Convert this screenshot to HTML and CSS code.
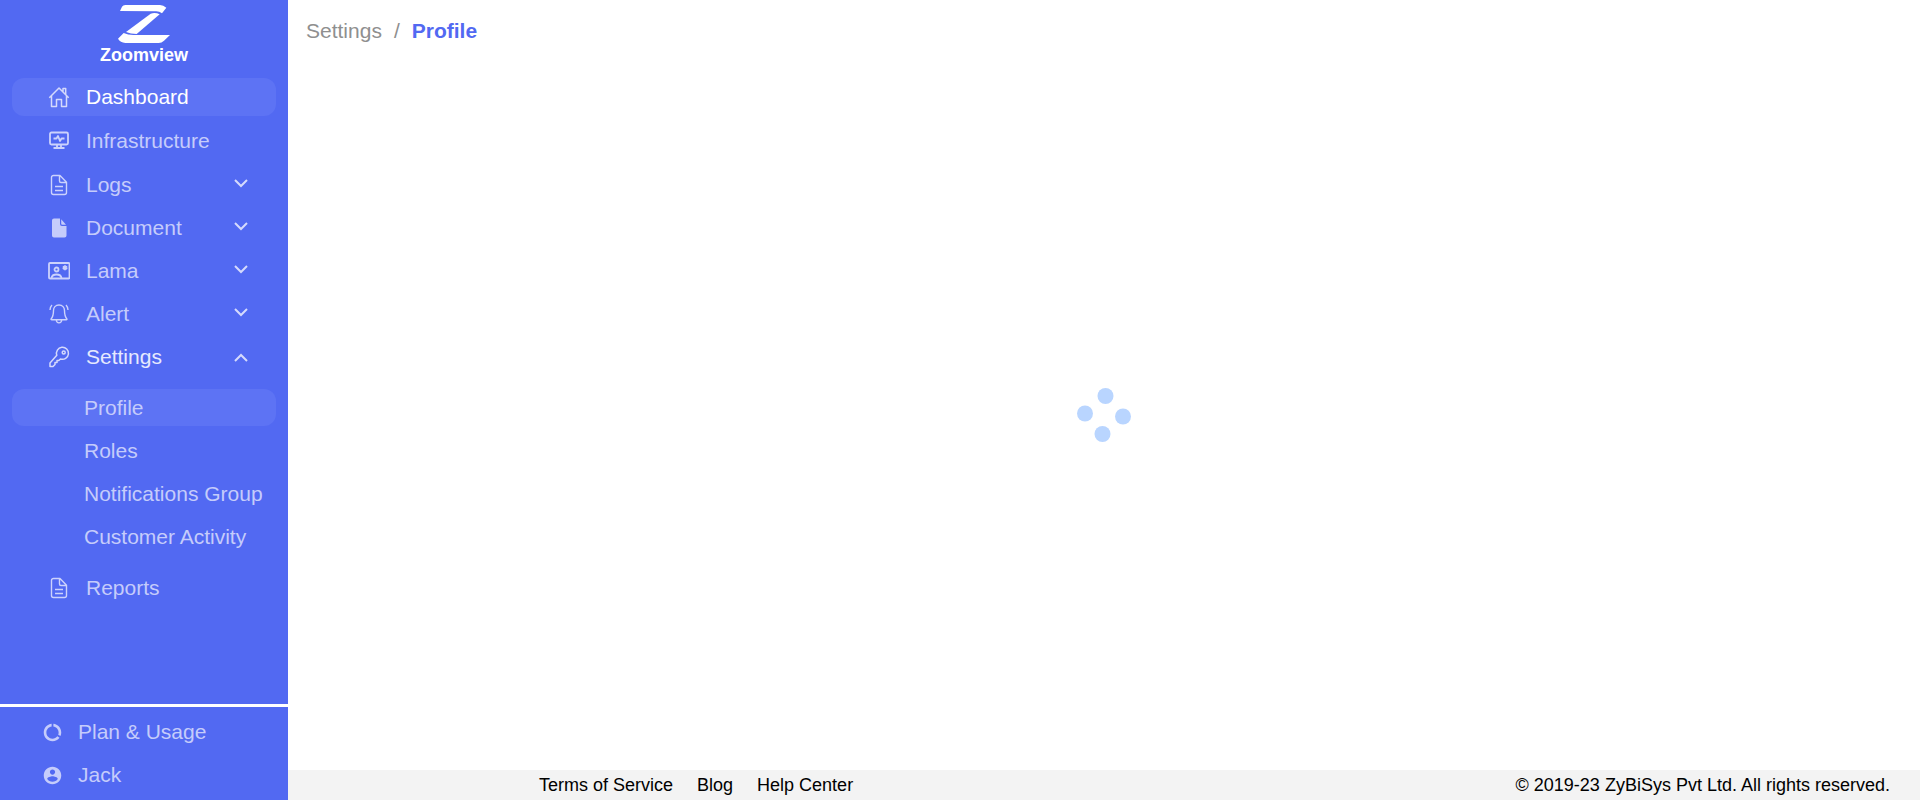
FILE: index.html
```html
<!DOCTYPE html>
<html lang="en">
<head>
<meta charset="utf-8">
<title>Zoomview - Profile</title>
<link rel="stylesheet" href="styles.css">
</head>
<body>
<div class="app">
  <aside class="sidebar">
    <a class="brand" href="#">
      <svg class="brand-mark" viewBox="354 15 156 114" aria-hidden="true">
        <path d="M360 33 366 20Q369 15 376 15H480Q490 15 499 23L486 40Q477 33 466 34Z"/>
        <path d="M378 96 452 41Q465 36 479 43L410 102Q392 102 378 96Z"/>
        <path d="M354 116 371 99Q384 105 400 105H510L492 122Q485 129 476 129H376Q361 127 354 116Z"/>
      </svg>
      <span>Zoomview</span>
    </a>
    <nav class="nav" aria-label="Main">
      <ul class="nav-list">
        <li class="plain"><a class="nav-row current" href="#">
          <svg class="icon" viewBox="0 0 22 22"><path d="M1.300 11.700 11 2l9.700 9.700M3.500 10v10.500h5v-7h5v7h5V10M15 5.500V2.500h2.700v6"/></svg>
          <span>Dashboard</span></a></li>
        <li class="plain"><a class="nav-row" href="#">
          <svg class="icon bold" viewBox="0 0 22 22"><rect x="2" y="2.500" width="18" height="12" rx="1.500"/><path d="M5.500 8.500h3l1.500-2.500 2 5 1.500-2.500h3M9 14.500v4M13 14.500v4M5.500 18h11"/></svg>
          <span>Infrastructure</span></a></li>
        <li><button class="nav-row" type="button">
          <svg class="icon thin" viewBox="0 0 22 22"><path d="M5.500 1.500H12l6.500 6.700v10.300a2 2 0 0 1-2 2h-11a2 2 0 0 1-2-2v-15a2 2 0 0 1 2-2zM11.500 1.500V7q0 1.500 1.500 1.500h5.500M7 12.500h8M7 16.500h8"/></svg>
          <span>Logs</span>
          <svg class="chevron" viewBox="0 0 14 14"><path d="m1 2 6 6 6-6"/></svg></button></li>
        <li><button class="nav-row" type="button">
          <svg class="icon solid" viewBox="0 0 22 22"><path d="M6 1.500h6V7q0 2 2 2h4.500v9.500a2 2 0 0 1-2 2H6a2 2 0 0 1-2-2v-15a2 2 0 0 1 2-2zM13.200 2.200l4.800 5.600h-3.800q-1 0-1-1z"/></svg>
          <span>Document</span>
          <svg class="chevron" viewBox="0 0 14 14"><path d="m1 2 6 6 6-6"/></svg></button></li>
        <li><button class="nav-row" type="button">
          <svg class="icon bold" viewBox="0 0 22 22"><rect x="1" y="3" width="20.500" height="15.500" rx="1"/><circle cx="8.500" cy="9.500" r="2"/><path d="M3.500 18q.5-3.500 5-3.500t5 3.500M17 5.200v5M14.800 6.400l4.400 2.600M14.800 9l4.400-2.600"/></svg>
          <span>Lama</span>
          <svg class="chevron" viewBox="0 0 14 14"><path d="m1 2 6 6 6-6"/></svg></button></li>
        <li><button class="nav-row" type="button">
          <svg class="icon thin" viewBox="0 0 22 22"><path d="M11 2C7.500 2 5.500 4.500 5.500 7.500c0 4-.5 6.300-2.400 8.500q-.3.700.6.700h14.600q.9 0 .6-.7C17 13.800 16.500 11.500 16.500 7.500 16.500 4.500 14.500 2 11 2zM8.300 17c.3 3.800 5.100 3.800 5.400 0M4 2Q2.200 3.700 2 7M18 2q1.800 1.700 2 5"/></svg>
          <span>Alert</span>
          <svg class="chevron" viewBox="0 0 14 14"><path d="m1 2 6 6 6-6"/></svg></button></li>
        <li>
          <button class="nav-row open" type="button" aria-expanded="true">
            <svg class="icon" viewBox="0 0 22 22"><path d="M8.800 9.300A6 6 0 1 1 12.500 13L10.800 14.500H9V16.500H7V18.500L5 20.500H2V17z"/><circle cx="15.700" cy="6.500" r="1.500"/></svg>
            <span>Settings</span>
            <svg class="chevron" viewBox="0 0 14 14"><path d="m1 11 6-6 6 6"/></svg></button>
          <ul class="subnav">
            <li><a class="sub-row current" href="#">Profile</a></li>
            <li><a class="sub-row" href="#">Roles</a></li>
            <li><a class="sub-row" href="#">Notifications Group</a></li>
            <li><a class="sub-row" href="#">Customer Activity</a></li>
          </ul>
        </li>
        <li><a class="nav-row" href="#">
          <svg class="icon thin" viewBox="0 0 22 22"><path d="M5.500 1.500H12l6.500 6.700v10.300a2 2 0 0 1-2 2h-11a2 2 0 0 1-2-2v-15a2 2 0 0 1 2-2zM11.500 1.500V7q0 1.500 1.500 1.500h5.500M7 12.500h8M7 16.500h8"/></svg>
          <span>Reports</span></a></li>
      </ul>
    </nav>
    <div class="account">
      <a class="account-row" href="#">
        <svg class="account-icon" viewBox="0 0 24 24"><path d="M13 2.050v3.030c3.390.49 6 3.390 6 6.920 0 .9-.18 1.750-.48 2.540l2.600 1.530c.56-1.240.88-2.620.88-4.070 0-5.180-3.950-9.450-9-9.950zM12 19c-3.870 0-7-3.130-7-7 0-3.530 2.610-6.430 6-6.920V2.050c-5.060.5-9 4.760-9 9.950 0 5.520 4.470 10 9.990 10 3.310 0 6.240-1.610 8.060-4.090l-2.600-1.530C16.170 17.980 14.210 19 12 19z"/></svg>
        <span>Plan &amp; Usage</span></a>
      <a class="account-row" href="#">
        <svg class="account-icon" viewBox="0 0 24 24"><path d="M12 2C6.480 2 2 6.480 2 12s4.480 10 10 10 10-4.480 10-10S17.520 2 12 2zm0 3c1.660 0 3 1.340 3 3s-1.340 3-3 3-3-1.340-3-3 1.340-3 3-3zm0 14.200c-2.500 0-4.710-1.280-6-3.220.030-1.990 4-3.080 6-3.080 1.990 0 5.970 1.090 6 3.080-1.290 1.940-3.500 3.220-6 3.220z"/></svg>
        <span>Jack</span></a>
    </div>
  </aside>
  <div class="page">
    <header class="topbar">
      <nav class="breadcrumb" aria-label="Breadcrumb">
        <a href="#">Settings</a><span>/</span><a class="here" href="#" aria-current="page">Profile</a>
      </nav>
    </header>
    <main class="content">
      <svg class="loader" viewBox="0 0 56 56" role="img" aria-label="Loading"><circle cx="29.500" cy="9" r="8"/><circle cx="9" cy="26.500" r="8"/><circle cx="47" cy="29.500" r="8"/><circle cx="26.500" cy="47" r="8"/></svg>
    </main>
    <footer class="footer">
      <nav class="footer-links" aria-label="Footer">
        <a href="#">Terms of Service</a>
        <a href="#">Blog</a>
        <a href="#">Help Center</a>
      </nav>
      <span>© 2019-23 ZyBiSys Pvt Ltd. All rights reserved.</span>
    </footer>
  </div>
</div>
</body>
</html>
```
FILE: styles.css
```css
* {
  box-sizing: border-box;
}

body {
  margin: 0;
  background: #fff;
  color: #000;
  font-family: "Liberation Sans", Arial, sans-serif;
  font-size: 21px;
  line-height: 24px;
}

a {
  color: inherit;
  text-decoration: none;
}

ul {
  list-style: none;
  margin: 0;
  padding: 0;
}

.app {
  display: flex;
  min-height: 100vh;
}

.sidebar {
  display: flex;
  flex-direction: column;
  flex: none;
  width: 288px;
  background: #5269f2;
  color: #c5ccfb;
}

.brand {
  display: flex;
  flex-direction: column;
  align-items: center;
  padding-top: 5px;
  margin-bottom: 11px;
  color: #fff;
  font-size: 18px;
  font-weight: bold;
  line-height: 24px;
}

.brand-mark {
  width: 52px;
  height: 38px;
  fill: #fff;
}

.nav {
  flex: 1;
  padding: 0 12px;
}

.nav-list {
  display: flex;
  flex-direction: column;
  gap: 5px;
}

.nav-list .plain {
  margin-bottom: 1px;
}

.nav-row {
  display: flex;
  align-items: center;
  gap: 16px;
  width: 100%;
  height: 38px;
  padding: 0 28px 0 36px;
  border: 0;
  border-radius: 12px;
  background: none;
  color: inherit;
  font: inherit;
  text-align: left;
}

.nav-row.current {
  background: #5d73f4;
  color: #fff;
}

.nav-row.open {
  color: #e6e9fe;
}

.icon {
  flex: none;
  width: 22px;
  height: 22px;
  fill: none;
  stroke: #d5dafc;
  stroke-width: 1.5;
  stroke-linejoin: round;
}

.icon.thin {
  stroke: #ccd2fc;
  stroke-width: 1.4;
}

.icon.bold {
  stroke: #ccd2fc;
  stroke-width: 1.8;
}

.icon.solid {
  fill: #c5ccfb;
  stroke: none;
}

.chevron {
  width: 14px;
  height: 14px;
  margin-left: auto;
  fill: none;
  stroke: #d5dafc;
  stroke-width: 2;
}

.subnav {
  display: flex;
  flex-direction: column;
  gap: 6px;
  margin: 13px 0 9px;
}

.sub-row {
  display: flex;
  align-items: center;
  height: 37px;
  padding-left: 72px;
  border-radius: 12px;
  white-space: nowrap;
}

.sub-row.current {
  background: #5d73f4;
}

.account {
  display: flex;
  flex-direction: column;
  gap: 5px;
  padding: 6px 0;
  border-top: 3px solid #fff;
}

.account-row {
  display: flex;
  align-items: center;
  gap: 15px;
  height: 38px;
  padding-left: 42px;
}

.account-icon {
  width: 21px;
  height: 21px;
  fill: #c5ccfb;
}

.page {
  display: flex;
  flex: 1;
  flex-direction: column;
  min-width: 0;
}

.topbar {
  display: flex;
  align-items: center;
  height: 60px;
  padding: 2px 18px 0;
}

.breadcrumb {
  display: flex;
  gap: 12px;
  color: #8f8f8f;
}

.breadcrumb .here {
  color: #5269f2;
  font-weight: bold;
}

.content {
  display: flex;
  flex: 1;
  align-items: center;
  justify-content: center;
}

.loader {
  width: 56px;
  height: 56px;
  fill: #b9d5ff;
}

.footer {
  display: flex;
  align-items: center;
  justify-content: space-between;
  height: 30px;
  padding: 0 30px 0 251px;
  background: #f3f3f3;
  font-size: 18px;
}

.footer-links {
  display: flex;
  gap: 24px;
}
```
